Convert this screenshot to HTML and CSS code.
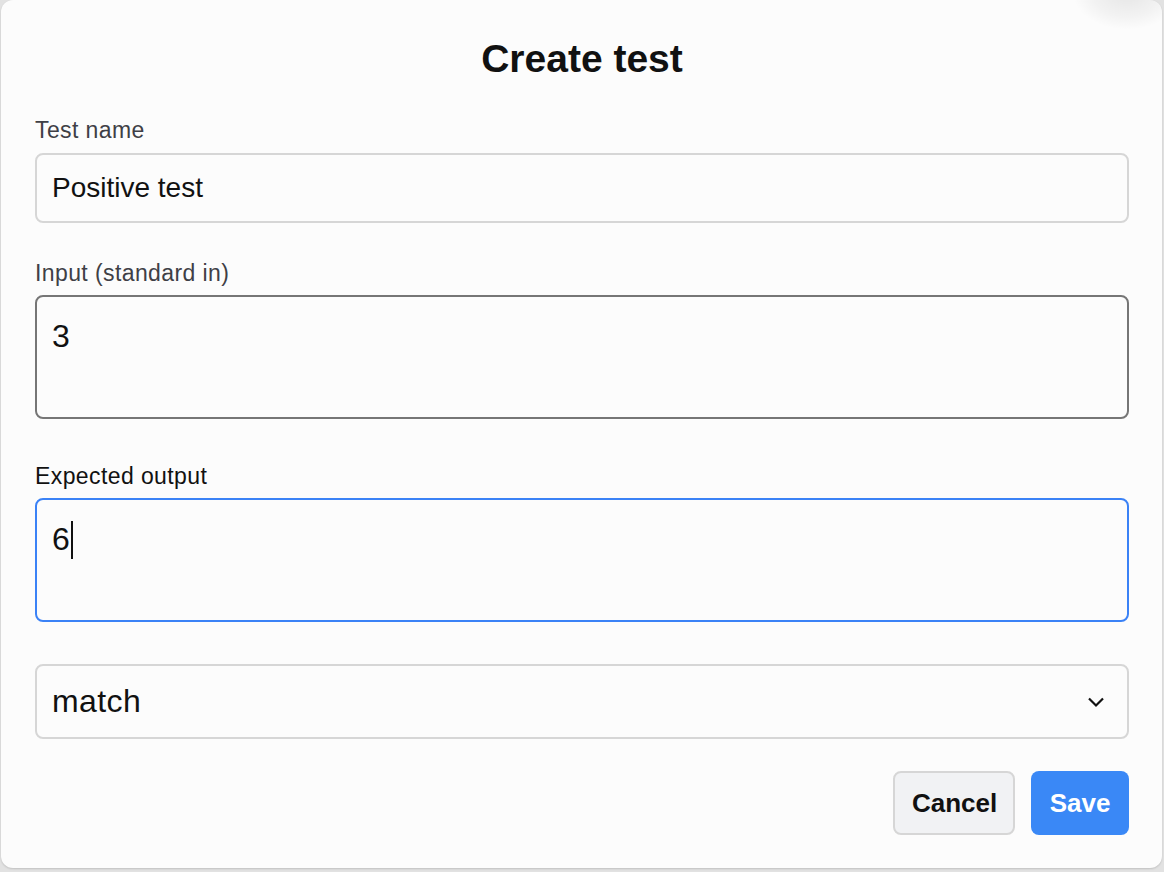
FILE: index.html
```html
<!DOCTYPE html>
<html lang="en">
<head>
<meta charset="utf-8">
<title>Create test</title>
<link rel="stylesheet" href="styles.css">
</head>
<body>
<div class="dialog">
  <div class="corner-shadow"></div>
  <h1 class="title">Create test</h1>
  <div class="group">
    <label class="label">Test name</label>
    <div class="field field-input">Positive test</div>
  </div>
  <div class="group group-2">
    <label class="label">Input (standard in)</label>
    <div class="field field-area field-hover">3</div>
  </div>
  <div class="group group-3">
    <label class="label label-active">Expected output</label>
    <div class="field field-area field-focus">6<span class="caret"></span></div>
  </div>
  <div class="field field-select">
    <span>match</span>
    <svg class="chevron" width="18" height="12" viewBox="0 0 18 12"><path d="M2 2.5 L9 9.5 L16 2.5" fill="none" stroke="#111" stroke-width="2.2"/></svg>
  </div>
  <div class="actions">
    <button class="btn btn-cancel">Cancel</button>
    <button class="btn btn-save">Save</button>
  </div>
</div>
</body>
</html>
```
FILE: styles.css
```css
html, body {
  margin: 0;
  padding: 0;
}
body {
  background: #e2e2e2;
  font-family: "Liberation Sans", Arial, sans-serif;
  width: 1164px;
  height: 872px;
  overflow: hidden;
}
.dialog {
  position: relative;
  box-sizing: border-box;
  width: 1161px;
  height: 868px;
  margin-left: 1px;
  background: #fcfcfc;
  border-radius: 12px;
  box-shadow: 0 1px 2px rgba(0,0,0,0.15);
  padding: 36px 33px 0 34px;
  display: flex;
  flex-direction: column;
  overflow: hidden;
}
.corner-shadow {
  position: absolute;
  right: -20px;
  top: -45px;
  width: 110px;
  height: 75px;
  background: radial-gradient(ellipse at center, rgba(0,0,0,0.09) 0%, rgba(0,0,0,0.04) 45%, rgba(0,0,0,0) 70%);
  pointer-events: none;
}
.title {
  margin: 0;
  text-align: center;
  font-size: 39px;
  line-height: 46px;
  font-weight: 700;
  color: #111;
}
.group {
  display: flex;
  flex-direction: column;
  gap: 9px;
  margin-top: 34px;
}
.group-2 {
  margin-top: 36px;
  gap: 8px;
}
.group-3 {
  margin-top: 43px;
  gap: 8px;
}
.label {
  font-size: 23px;
  line-height: 28px;
  color: #3f3f46;
  letter-spacing: 0.4px;
}
.label-active {
  color: #111;
}
.field {
  box-sizing: border-box;
  border: 2px solid #d6d6d6;
  border-radius: 8px;
  background: #fcfcfc;
  color: #111;
  padding-left: 15px;
}
.field-input {
  height: 70px;
  font-size: 28px;
  line-height: 34px;
  padding-top: 16px;
}
.field-area {
  height: 124px;
  font-size: 32px;
  line-height: 38px;
  padding-top: 20px;
}
.field-hover {
  border-color: #767676;
}
.field-focus {
  border-color: #3b82f6;
}
.caret {
  display: inline-block;
  width: 2px;
  height: 38px;
  background: #111;
  vertical-align: -9px;
  margin-left: 1px;
}
.field-select {
  margin-top: 42px;
  height: 75px;
  font-size: 32px;
  letter-spacing: 0.4px;
  display: flex;
  align-items: center;
  justify-content: space-between;
  padding-right: 22px;
}
.chevron {
  display: block;
}
.actions {
  display: flex;
  justify-content: flex-end;
  gap: 16px;
  margin-top: 32px;
}
.btn {
  box-sizing: border-box;
  height: 64px;
  border-radius: 8px;
  font-family: "Liberation Sans", Arial, sans-serif;
  font-size: 26px;
  font-weight: 700;
  padding: 0 17px;
  cursor: pointer;
}
.btn-cancel {
  width: 122px;
  background: #f1f2f4;
  border: 2px solid #d6d6d6;
  color: #111;
}
.btn-save {
  width: 98px;
  background: #3a88f6;
  border: none;
  color: #fff;
}
```
